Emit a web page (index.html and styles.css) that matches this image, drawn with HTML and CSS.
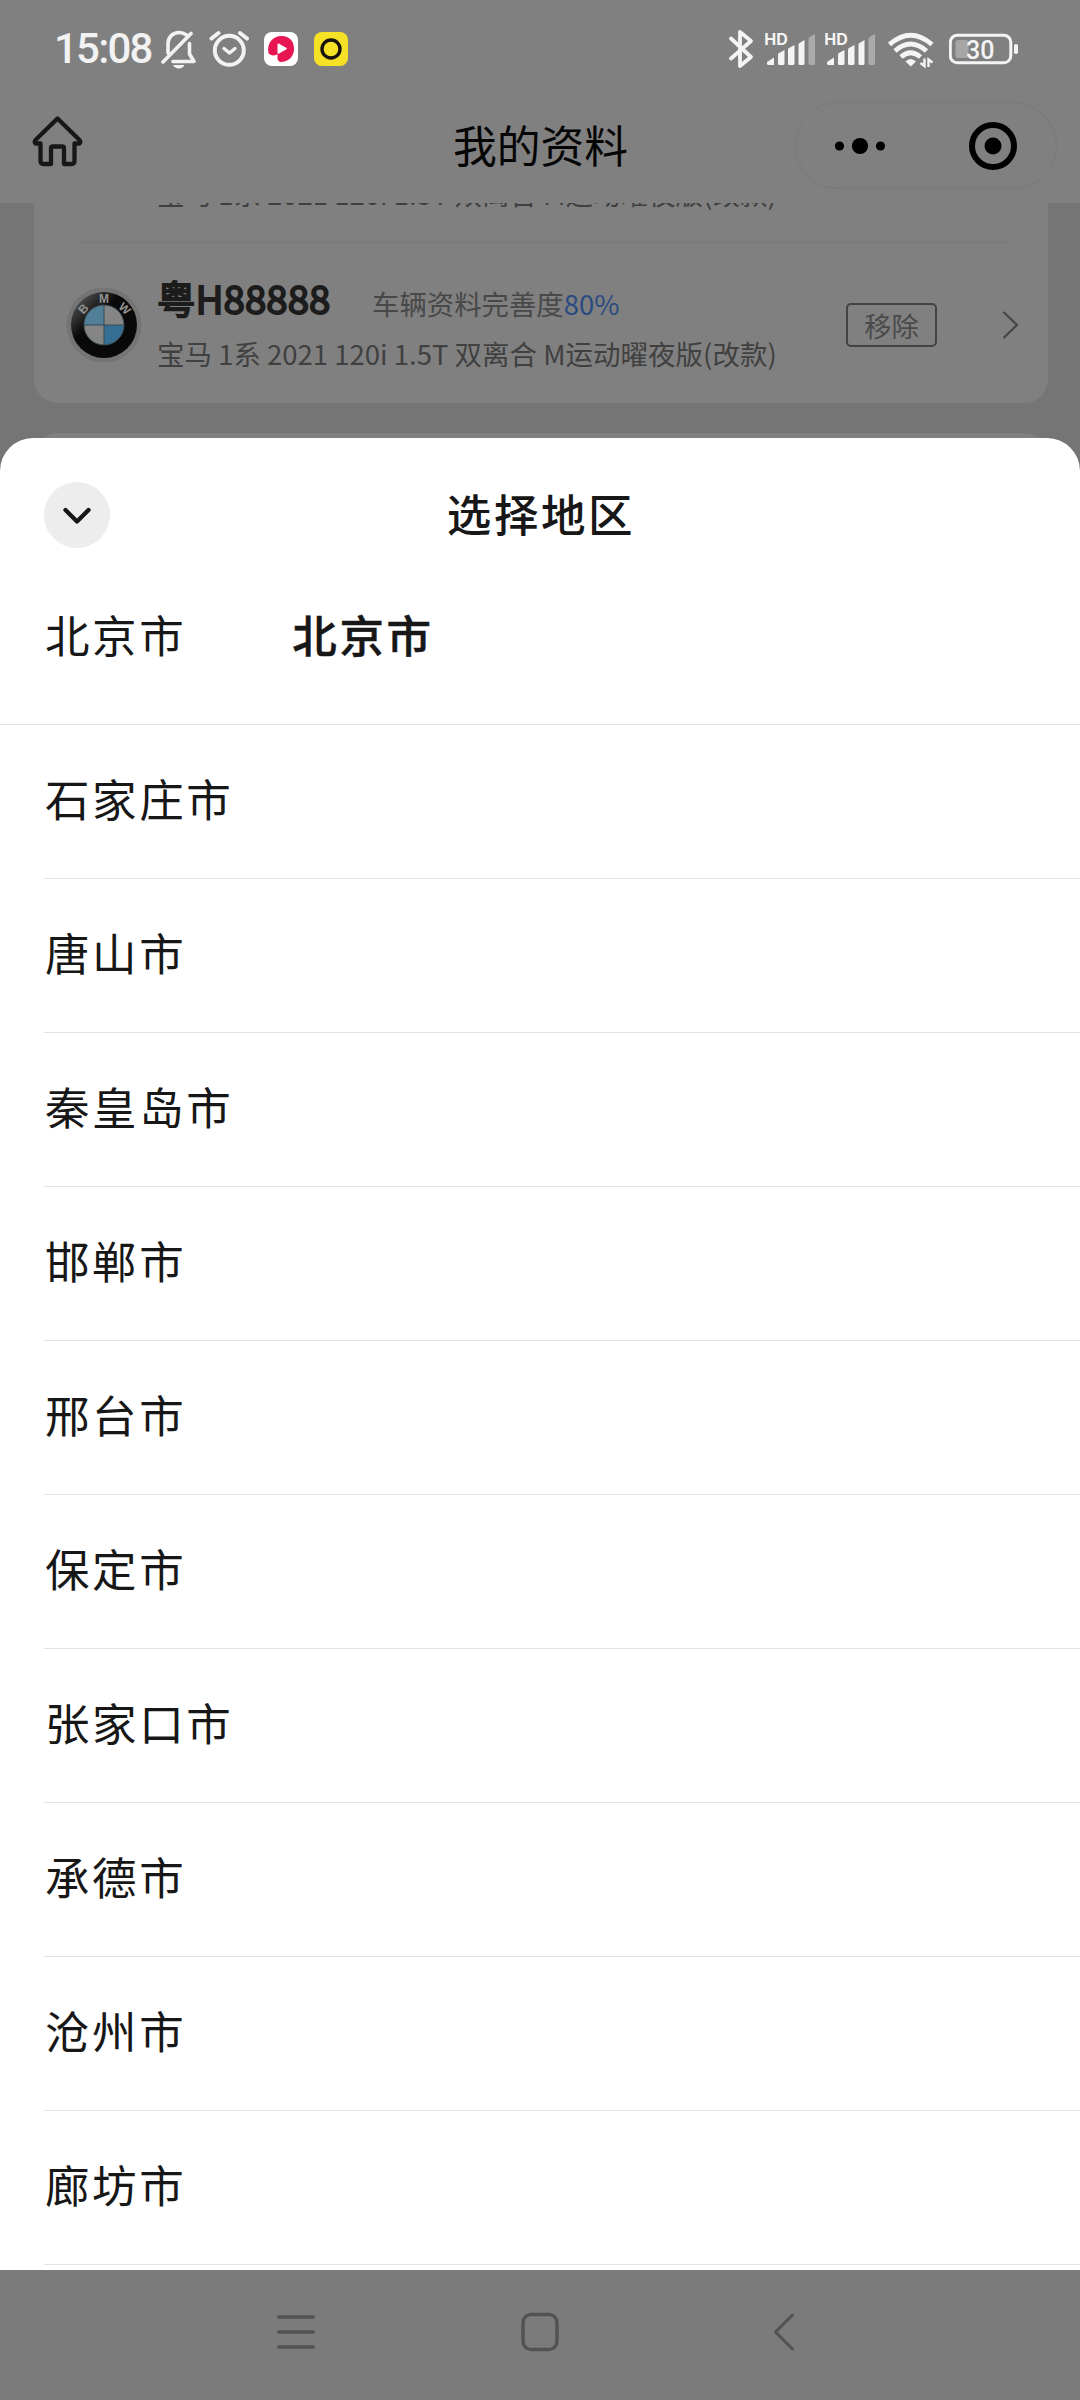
FILE: index.html
```html
<!DOCTYPE html>
<html lang="zh-CN">
<head>
<meta charset="utf-8">
<title>选择地区</title>
<link rel="stylesheet" href="styles.css">
</head>
<body>
<div class="screen">
  <header class="top">
    <div class="status">
      <div class="status-left">
        <span class="clock">15:08</span>
        <svg class="bell" width="36" height="40" viewBox="161 29 36 40" fill="none" stroke="#f2f2f2" stroke-width="3.6" stroke-linecap="round" stroke-linejoin="round">
          <path d="M168 53V44C168 37 173 32.5 179 32.5c3 0 5.500 1 7.500 2.500M163 62L191 33.500M173 61.500H194L189.500 54V43.500"/>
          <path d="M173 65h11.500c-1 2.300-3 3.400-5.700 3.400s-4.800-1.100-5.800-3.400z" fill="#f2f2f2" stroke="none"/>
        </svg>
        <svg class="alarm" width="40" height="40" viewBox="209 29 40 40" fill="none" stroke="#f2f2f2" stroke-width="4" stroke-linecap="round" stroke-linejoin="round">
          <circle cx="229.300" cy="50.300" r="14.500"/><path d="M224 48.500l5.500 4.500 5.500-4.500" stroke-width="3.400"/><path d="M211.500 38.500l7-5.500M240 33l7 5.500"/>
        </svg>
        <svg class="app-pink" width="34" height="34" viewBox="0 0 34 34">
          <rect width="34" height="34" rx="8" fill="#fff"/>
          <path d="M4.500 21C2.500 11 9 4 17.500 4S30 9.500 30 17c0 7-5 12.500-12.500 13-3 0-4-2-4-4v-4c-1 1.500-7 2.500-9-1z" fill="#e71653"/>
          <path d="M13.500 12.500c0-1 .8-1.300 1.600-.8l7 4c.9.500.9 1.400 0 1.900l-7 4c-.8.500-1.600.2-1.600-.8z" fill="#fff"/>
        </svg>
        <svg class="app-yellow" width="34" height="34" viewBox="0 0 34 34">
          <rect width="34" height="34" rx="8" fill="#f5e125"/><circle cx="17" cy="17" r="9" fill="none" stroke="#17120a" stroke-width="3.400"/>
        </svg>
      </div>
      <div class="status-right">
        <svg class="bluetooth" width="26" height="40" viewBox="728 29 26 40" fill="none" stroke="#f4f4f4" stroke-width="3.800" stroke-linecap="round" stroke-linejoin="round">
          <path d="M731 38.500l20 18.500-11 9V32l11 9-20 17.500"/>
        </svg>
        <svg class="signal" width="50" height="40" viewBox="765 29 50 40" fill="#f4f4f4">
          <text x="764.200" y="45" class="hd">HD</text>
          <path d="M767 62l7-4.500V65h-5.500q-1.500 0-1.500-1.500zM778 54.500q0-1 1-1.500l5.500-3V63.500q0 1.500-1.500 1.500h-3.500q-1.500 0-1.500-1.500zM788 50q0-1.500 1-2l5.500-3V63.500q0 1.500-1.500 1.500h-3.500q-1.500 0-1.500-1.500zM798.500 44.500q0-1 1-1.500l5-3V63.500q0 1.500-1.500 1.500h-3q-1.500 0-1.500-1.500z"/>
          <path d="M808.500 38.500q0-1 1-1.500l5.500-3V63.500q0 1.500-1.500 1.500h-3.500q-1.500 0-1.500-1.500z" fill="#ababab"/>
        </svg>
        <svg class="signal second" width="50" height="40" viewBox="765 29 50 40" fill="#f4f4f4">
          <text x="764.200" y="45" class="hd">HD</text>
          <path d="M767 62l7-4.500V65h-5.500q-1.500 0-1.500-1.500zM778 54.500q0-1 1-1.500l5.500-3V63.500q0 1.500-1.500 1.500h-3.500q-1.500 0-1.500-1.500zM788 50q0-1.500 1-2l5.500-3V63.500q0 1.500-1.500 1.500h-3.500q-1.500 0-1.500-1.500zM798.500 44.500q0-1 1-1.500l5-3V63.500q0 1.500-1.500 1.500h-3q-1.500 0-1.500-1.500z"/>
          <path d="M808.500 38.500q0-1 1-1.500l5.500-3V63.500q0 1.500-1.500 1.500h-3.500q-1.500 0-1.500-1.500z" fill="#ababab"/>
        </svg>
        <svg class="wifi" width="46" height="40" viewBox="888 29 46 40" fill="none" stroke="#f4f4f4" stroke-width="4.800">
          <path d="M889.500 44.500Q910.500 26 932 44.500M895 51Q910.500 37 926.500 51M901 57Q910.500 48.500 920.500 57"/>
          <path d="M905.500 61.500q5.200-5 10.500 0l-5.200 5z" fill="#f4f4f4" stroke="none"/>
          <path d="M924.500 58.500v7.500l-4-3M928.500 67v-7.500l4 3" stroke-width="2.400"/>
        </svg>
        <svg class="battery" width="70" height="40" viewBox="949 29 70 40">
          <rect x="955.500" y="40" width="13" height="18" rx="3" fill="#a6a6a6"/>
          <rect x="950.300" y="35.300" width="60.500" height="27.500" rx="7" fill="none" stroke="#f4f4f4" stroke-width="3"/>
          <rect x="1014" y="44" width="4" height="10" rx="1.800" fill="#f4f4f4"/>
          <text x="966" y="58.500" class="level">30</text>
        </svg>
      </div>
    </div>
    <div class="navbar">
      <svg class="home" width="54" height="54" viewBox="31 115 54 54" fill="none" stroke="#171717" stroke-width="4.300" stroke-linejoin="round" stroke-linecap="round">
        <path d="M57.500 118.500L79.500 140q1.500 2 0 3.500H74.500V161q0 3-3 3H64V148.500q0-2-2-2H53q-2 0-2 2V164H43.500q-3 0-3-3V143.500H35.500q-1.500-1.500 0-3.500z"/>
      </svg>
      <h1 class="page-title">我的资料</h1>
      <div class="capsule">
        <svg width="52" height="20" viewBox="0 0 52 20"><circle cx="5.500" cy="10" r="4.600"/><circle cx="26" cy="10" r="8.100"/><circle cx="46.500" cy="10" r="4.600"/></svg>
        <span class="capsule-line"></span>
        <svg width="48" height="48" viewBox="0 0 48 48"><circle cx="24" cy="24" r="21" fill="none" stroke="#000" stroke-width="6"/><circle cx="24" cy="24" r="8.500"/></svg>
      </div>
    </div>
  </header>

  <main class="content">
    <section class="card">
      <div class="car-clipped"><p class="model">宝马 1系 2021 120i 1.5T 双离合 M运动曜夜版(改款)</p></div>
      <div class="divider"></div>
      <div class="car">
        <svg class="logo" width="76" height="76" viewBox="0 0 76 76">
          <defs><linearGradient id="ring" x1="0" y1="0" x2=".7" y2=".7"><stop offset=".1" stop-color="#595959"/><stop offset=".55" stop-color="#090909"/></linearGradient></defs>
          <circle cx="38" cy="38" r="37.500" fill="#747474"/>
          <circle cx="38" cy="38" r="33" fill="url(#ring)"/>
          <circle cx="38" cy="38" r="20" fill="#858585"/>
          <path d="M38 38V18A20 20 0 0 0 18 38z" fill="#527f98"/>
          <path d="M38 38V58A20 20 0 0 0 58 38z" fill="#376f94"/>
          <path d="M38 18V58M18 38H58" stroke="#344b58" stroke-width="1"/>
          <circle cx="38" cy="38" r="20" fill="none" stroke="#3c4a52" stroke-width="1"/>
          <g class="logo-letter"><text x="38" y="16">M</text><text transform="translate(20.500 24.500) rotate(-48)">B</text><text transform="translate(56 24.500) rotate(43)">W</text></g>
        </svg>
        <div class="car-info">
          <div class="car-head"><strong class="plate">粤H88888</strong><span class="complete">车辆资料完善度<b>80%</b></span></div>
          <p class="model">宝马 1系 2021 120i 1.5T 双离合 M运动曜夜版(改款)</p>
        </div>
        <span class="remove">移除</span>
        <svg class="go" width="17" height="30" viewBox="0 0 17 30" fill="none" stroke="#464646" stroke-width="2.200"><path d="M1.500 2L15 15 1.500 28"/></svg>
      </div>
    </section>
    <section class="card next"></section>
  </main>

  <section class="sheet">
    <div class="sheet-head">
      <span class="close"><svg width="32" height="20" viewBox="0 0 32 20" fill="none" stroke="#171717" stroke-width="4.300" stroke-linecap="round" stroke-linejoin="round"><path d="M4.500 4L16 15.500 27.500 4"/></svg></span>
      <h2 class="sheet-title">选择地区</h2>
    </div>
    <div class="tabs"><span>北京市</span><span class="active">北京市</span></div>
    <ul class="cities">
      <li>石家庄市</li>
      <li>唐山市</li>
      <li>秦皇岛市</li>
      <li>邯郸市</li>
      <li>邢台市</li>
      <li>保定市</li>
      <li>张家口市</li>
      <li>承德市</li>
      <li>沧州市</li>
      <li>廊坊市</li>
    </ul>
  </section>

  <nav class="system-nav">
    <svg width="38" height="40" viewBox="0 0 38 40" stroke="#525252" stroke-width="3.600" stroke-linecap="round"><path d="M2 5H36M2 20H36M2 35H36"/></svg>
    <svg width="38" height="40" viewBox="0 0 38 40" fill="none" stroke="#525252" stroke-width="3.400"><rect x="2" y="2.500" width="34" height="35" rx="8"/></svg>
    <svg width="38" height="40" viewBox="0 0 38 40" fill="none" stroke="#525252" stroke-width="3" stroke-linecap="round" stroke-linejoin="round"><path d="M27.500 3L10.500 20 27.500 37"/></svg>
  </nav>
</div>
</body>
</html>
```
FILE: styles.css
```css
* { box-sizing: border-box; }
body, h1, h2, p, ul { margin: 0; padding: 0; }
body { font-family: "Noto Sans CJK SC", sans-serif; background: #757575; }
svg { display: block; flex: none; }

.screen { width: 1080px; height: 2400px; display: flex; flex-direction: column; overflow: hidden; background: #757575; }

.top { height: 203px; background: #808080; flex: none; }
.status { height: 98px; display: flex; justify-content: space-between; padding: 0 61px 0 54px; }
.status-left, .status-right { display: flex; align-items: center; }
.clock { width: 97px; font: 500 42px/60px Roboto, sans-serif; letter-spacing: -1.8px; color: #f2f2f2; white-space: nowrap; }
.bell { margin-left: 10px; }
.alarm { margin-left: 12px; }
.app-pink { margin-left: 15px; }
.app-yellow { margin-left: 16px; }
.signal { margin-left: 11px; }
.signal.second { margin-left: 10px; }
.wifi { margin-left: 13px; }
.battery { margin-left: 15px; }
.hd { font: 700 16px Inter, sans-serif; }
.level { font: 500 25px Roboto, sans-serif; fill: #f4f4f4; }

.navbar { height: 96px; display: grid; grid-template-columns: 1fr auto 1fr; align-items: center; padding: 0 23px 0 31px; }
.home { margin-bottom: 8px; }
.page-title { font-weight: 400; font-size: 43.8px; line-height: 60px; color: #050505; margin: -4px 0 0 -7px; }
.capsule { justify-self: end; width: 262px; height: 87px; border: 1px solid #797979; border-radius: 44px; display: flex; align-items: center; padding: 0 39px 0 38px; margin-top: -1px; }
.capsule-line { width: 1px; height: 48px; background: #717171; margin: 0 43px 0 40px; }

.content { height: 270px; flex: none; padding: 0 32px 0 34px; }
.card { background: #808080; border-radius: 0 0 24px 24px; height: 200px; overflow: hidden; }
.card.next { height: 40px; margin-top: 30px; border-radius: 24px 24px 0 0; }
.car-clipped { height: 39px; overflow: hidden; padding-left: 123px; }
.car-clipped .model { margin-top: -30px; }
.model { font-size: 27.5px; line-height: 40px; color: #404040; white-space: nowrap; font-weight: 400; }
.divider { height: 1px; margin: 0 40px 0 46px; background: #797979; }
.car { height: 160px; margin: 0 28px 0 32px; padding-right: 1px; display: flex; align-items: center; padding-bottom: 1px; }
.logo { margin-top: 5px; }
.logo-letter { font: 700 12px "Liberation Sans", sans-serif; text-anchor: middle; fill: #929292; }
.car-info { width: 704px; flex: none; padding-left: 15px; margin-top: -7px; }
.car-head { display: flex; align-items: center; height: 60px; margin-bottom: 8px; padding-top: 5px; }
.plate { font-size: 38.5px; font-weight: 400; -webkit-text-stroke: 1.8px #1c1c1c; line-height: 50px; color: #1c1c1c; width: 215px; margin-top: -1px; white-space: nowrap; }
.complete { font-size: 27.4px; line-height: 40px; color: #484848; white-space: nowrap; font-weight: 400; margin-top: 11px; }
.complete b { font-weight: 400; color: #294a80; }
.remove { width: 91px; height: 44px; flex: none; border: 2px solid #434343; border-radius: 5px; color: #4a4a4a; font-size: 27.300px; line-height: 40px; text-align: center; font-weight: 400; margin-top: 4px; }
.go { margin-left: auto; margin-top: 5px; }

.sheet { position: relative; margin-top: -35px; height: 1832px; flex: none; overflow: hidden; background: #fff; border-radius: 33px 33px 0 0; color: #171717; font-size: 44.500px; letter-spacing: 2.600px; }
.sheet-head { height: 154px; display: grid; grid-template-columns: 1fr auto 1fr; align-items: center; padding: 0 44px; }
.close { width: 66px; height: 66px; border-radius: 50%; background: #ededed; display: flex; align-items: center; justify-content: center; padding-top: 2px; }
.sheet-title { font-size: 44.500px; line-height: 60px; font-weight: 500; margin: -4px 0 0 2px; }
.tabs { height: 133px; border-bottom: 1px solid #e3e3e3; display: flex; gap: 106px; padding: 12px 45px 0; line-height: 60px; }
.tabs .active { font-weight: 500; -webkit-text-stroke: .5px #171717; }
.cities { list-style: none; padding-left: 44px; }
.cities li { height: 154px; line-height: 145px; border-bottom: 1px solid #e3e3e3; padding-left: 1px; }

.system-nav { height: 130px; flex: none; background: #7b7b7b; display: flex; justify-content: center; gap: 206px; padding-top: 42px; }
```
